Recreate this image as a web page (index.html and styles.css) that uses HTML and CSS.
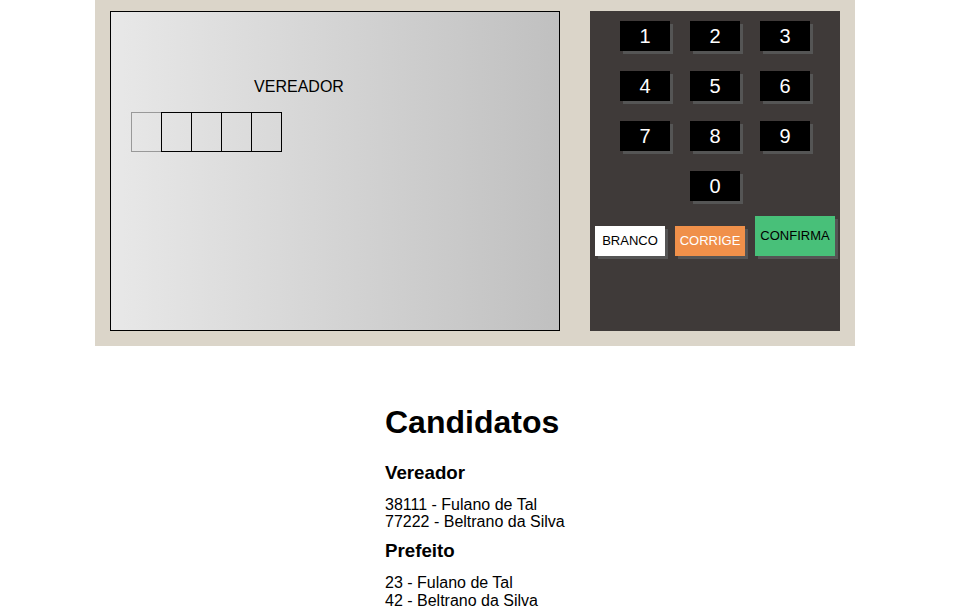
FILE: index.html
```html
<!DOCTYPE html>
<html lang="pt-BR">
<head>
<meta charset="utf-8">
<title>Urna</title>
<link rel="stylesheet" href="styles.css">
</head>
<body>
<div class="page">
  <div class="urna">
    <div class="tela">
      <div class="tela-top">
        <div class="tela-left">
          <div class="cargo">VEREADOR</div>
          <div class="numeros">
            <div class="numero pisca"></div>
            <div class="numero"></div>
            <div class="numero"></div>
            <div class="numero"></div>
            <div class="numero"></div>
          </div>
        </div>
        <div class="tela-right"></div>
      </div>
    </div>
    <div class="teclado">
      <div class="teclado-linha">
        <div class="tecla">1</div>
        <div class="tecla">2</div>
        <div class="tecla">3</div>
      </div>
      <div class="teclado-linha">
        <div class="tecla">4</div>
        <div class="tecla">5</div>
        <div class="tecla">6</div>
      </div>
      <div class="teclado-linha">
        <div class="tecla">7</div>
        <div class="tecla">8</div>
        <div class="tecla">9</div>
      </div>
      <div class="teclado-linha">
        <div class="tecla">0</div>
      </div>
      <div class="teclado-acoes">
        <div class="botao botao-branco">BRANCO</div>
        <div class="botao botao-corrige">CORRIGE</div>
        <div class="botao botao-confirma">CONFIRMA</div>
      </div>
    </div>
  </div>

  <div class="candidatos">
    <h1>Candidatos</h1>
    <h3>Vereador</h3>
    <p>38111 - Fulano de Tal<br>77222 - Beltrano da Silva</p>
    <h3>Prefeito</h3>
    <p>23 - Fulano de Tal<br>42 - Beltrano da Silva</p>
  </div>
</div>
</body>
</html>
```
FILE: styles.css
```css
html, body {
  margin: 0;
  padding: 0;
  background: #ffffff;
}

body {
  font-family: "Liberation Sans", Arial, sans-serif;
  color: #000;
}

.page {
  width: 950px;
}

.urna {
  width: 760px;
  height: 346px;
  margin: 0 auto;
  background: #DBD5C9;
  box-sizing: border-box;
  padding: 11px 15px 15px 15px;
  display: flex;
  gap: 30px;
}

.tela {
  width: 450px;
  height: 320px;
  box-sizing: border-box;
  border: 1px solid #000;
  background: linear-gradient(to right, #E8E8E8, #C0C0C0);
  display: flex;
  flex-direction: column;
}

.tela-top {
  display: flex;
  flex: 1;
}

.tela-left {
  width: 376px;
}

.cargo {
  font-size: 16px;
  line-height: 18px;
  text-align: center;
  margin-top: 66px;
}

.numeros {
  display: flex;
  margin-top: 16px;
  padding-left: 20px;
}

.numero {
  width: 31px;
  height: 40px;
  box-sizing: border-box;
  border: 1px solid #000;
  margin-right: -1px;
  position: relative;
}

.numero.pisca {
  border-color: #999;
}

.numero + .numero {
  z-index: 1;
}

.teclado {
  width: 250px;
  height: 320px;
  background: #3F3A39;
  box-sizing: border-box;
  padding-top: 10px;
  display: flex;
  flex-direction: column;
  align-items: center;
}

.teclado-linha {
  display: flex;
  justify-content: center;
  gap: 20px;
  margin-bottom: 20px;
}

.teclado-linha:nth-child(4) {
  margin-bottom: 15px;
}

.tecla {
  width: 50px;
  height: 30px;
  background: #000;
  color: #fff;
  font-size: 20px;
  line-height: 30px;
  text-align: center;
  box-shadow: 3px 3px 0 #555;
}

.teclado-acoes {
  display: flex;
  align-items: flex-end;
  gap: 10px;
}

.botao {
  width: 70px;
  height: 30px;
  font-size: 13px;
  line-height: 30px;
  text-align: center;
  box-shadow: 3px 3px 0 #555;
}

.botao-branco {
  background: #fff;
  color: #000;
}

.botao-corrige {
  background: #F0904A;
  color: #fff;
}

.botao-confirma {
  width: 80px;
  height: 40px;
  line-height: 40px;
  background: #48C079;
  color: #000;
}

.candidatos {
  width: 180px;
  margin: 0 auto;
  padding-top: 37px;
}

.candidatos h1 {
  font-size: 32px;
  line-height: 37px;
  font-weight: bold;
  margin: 21.4px 0 21.4px 0;
}

.candidatos h3 {
  font-size: 18.72px;
  line-height: 20px;
  font-weight: bold;
  margin: 11px 0 13px 0;
}

.candidatos p {
  font-size: 16px;
  line-height: 17.3px;
  margin: 0;
  white-space: nowrap;
}
```
